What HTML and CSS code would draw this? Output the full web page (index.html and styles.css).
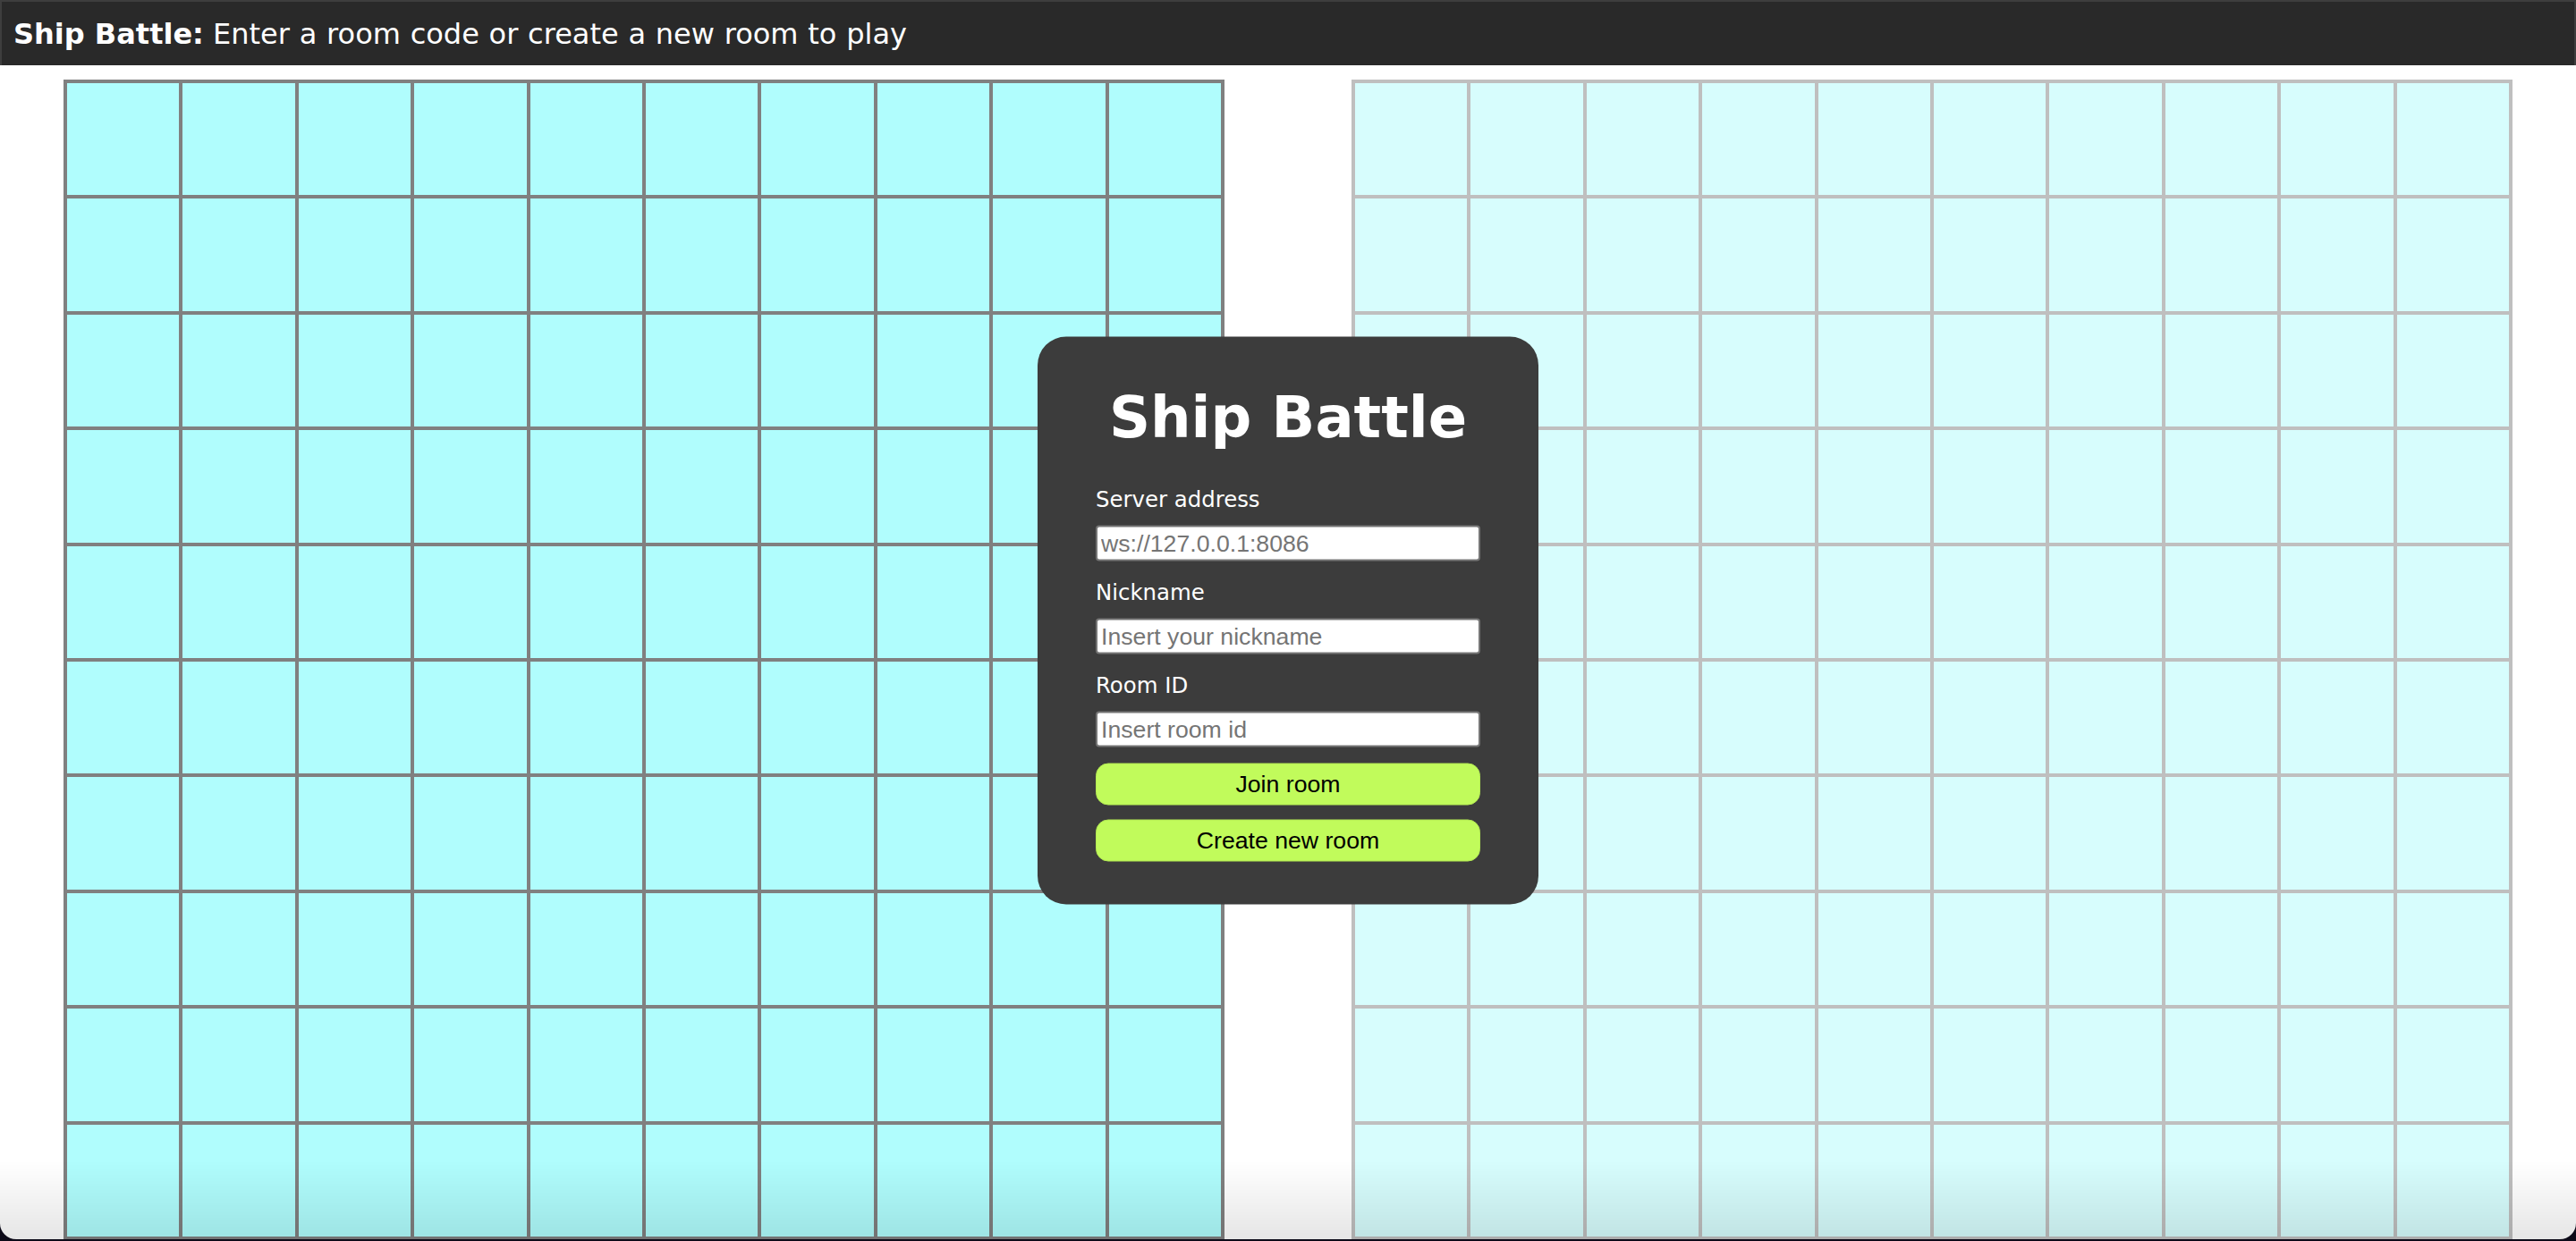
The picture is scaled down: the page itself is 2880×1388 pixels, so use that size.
FILE: index.html
```html
<!DOCTYPE html>
<html lang="en">
<head>
<meta charset="utf-8">
<title>Ship Battle</title>
<link rel="stylesheet" href="styles.css">
</head>
<body>
<header class="topbar"><b>Ship Battle:</b> <span class="topbar-msg">Enter a room code or create a new room to play</span></header>
<main class="boards">
  <div class="board">
    <div class="cell"></div><div class="cell"></div><div class="cell"></div><div class="cell"></div><div class="cell"></div><div class="cell"></div><div class="cell"></div><div class="cell"></div><div class="cell"></div><div class="cell"></div>
    <div class="cell"></div><div class="cell"></div><div class="cell"></div><div class="cell"></div><div class="cell"></div><div class="cell"></div><div class="cell"></div><div class="cell"></div><div class="cell"></div><div class="cell"></div>
    <div class="cell"></div><div class="cell"></div><div class="cell"></div><div class="cell"></div><div class="cell"></div><div class="cell"></div><div class="cell"></div><div class="cell"></div><div class="cell"></div><div class="cell"></div>
    <div class="cell"></div><div class="cell"></div><div class="cell"></div><div class="cell"></div><div class="cell"></div><div class="cell"></div><div class="cell"></div><div class="cell"></div><div class="cell"></div><div class="cell"></div>
    <div class="cell"></div><div class="cell"></div><div class="cell"></div><div class="cell"></div><div class="cell"></div><div class="cell"></div><div class="cell"></div><div class="cell"></div><div class="cell"></div><div class="cell"></div>
    <div class="cell"></div><div class="cell"></div><div class="cell"></div><div class="cell"></div><div class="cell"></div><div class="cell"></div><div class="cell"></div><div class="cell"></div><div class="cell"></div><div class="cell"></div>
    <div class="cell"></div><div class="cell"></div><div class="cell"></div><div class="cell"></div><div class="cell"></div><div class="cell"></div><div class="cell"></div><div class="cell"></div><div class="cell"></div><div class="cell"></div>
    <div class="cell"></div><div class="cell"></div><div class="cell"></div><div class="cell"></div><div class="cell"></div><div class="cell"></div><div class="cell"></div><div class="cell"></div><div class="cell"></div><div class="cell"></div>
    <div class="cell"></div><div class="cell"></div><div class="cell"></div><div class="cell"></div><div class="cell"></div><div class="cell"></div><div class="cell"></div><div class="cell"></div><div class="cell"></div><div class="cell"></div>
    <div class="cell"></div><div class="cell"></div><div class="cell"></div><div class="cell"></div><div class="cell"></div><div class="cell"></div><div class="cell"></div><div class="cell"></div><div class="cell"></div><div class="cell"></div>
  </div>
  <div class="board board-enemy">
    <div class="cell"></div><div class="cell"></div><div class="cell"></div><div class="cell"></div><div class="cell"></div><div class="cell"></div><div class="cell"></div><div class="cell"></div><div class="cell"></div><div class="cell"></div>
    <div class="cell"></div><div class="cell"></div><div class="cell"></div><div class="cell"></div><div class="cell"></div><div class="cell"></div><div class="cell"></div><div class="cell"></div><div class="cell"></div><div class="cell"></div>
    <div class="cell"></div><div class="cell"></div><div class="cell"></div><div class="cell"></div><div class="cell"></div><div class="cell"></div><div class="cell"></div><div class="cell"></div><div class="cell"></div><div class="cell"></div>
    <div class="cell"></div><div class="cell"></div><div class="cell"></div><div class="cell"></div><div class="cell"></div><div class="cell"></div><div class="cell"></div><div class="cell"></div><div class="cell"></div><div class="cell"></div>
    <div class="cell"></div><div class="cell"></div><div class="cell"></div><div class="cell"></div><div class="cell"></div><div class="cell"></div><div class="cell"></div><div class="cell"></div><div class="cell"></div><div class="cell"></div>
    <div class="cell"></div><div class="cell"></div><div class="cell"></div><div class="cell"></div><div class="cell"></div><div class="cell"></div><div class="cell"></div><div class="cell"></div><div class="cell"></div><div class="cell"></div>
    <div class="cell"></div><div class="cell"></div><div class="cell"></div><div class="cell"></div><div class="cell"></div><div class="cell"></div><div class="cell"></div><div class="cell"></div><div class="cell"></div><div class="cell"></div>
    <div class="cell"></div><div class="cell"></div><div class="cell"></div><div class="cell"></div><div class="cell"></div><div class="cell"></div><div class="cell"></div><div class="cell"></div><div class="cell"></div><div class="cell"></div>
    <div class="cell"></div><div class="cell"></div><div class="cell"></div><div class="cell"></div><div class="cell"></div><div class="cell"></div><div class="cell"></div><div class="cell"></div><div class="cell"></div><div class="cell"></div>
    <div class="cell"></div><div class="cell"></div><div class="cell"></div><div class="cell"></div><div class="cell"></div><div class="cell"></div><div class="cell"></div><div class="cell"></div><div class="cell"></div><div class="cell"></div>
  </div>
</main>
<div class="dialog">
  <h1 class="dialog-title">Ship Battle</h1>
  <form class="dialog-form">
    <label class="field-label" for="server">Server address</label>
    <input class="field-input" id="server" type="text" placeholder="ws://127.0.0.1:8086">
    <label class="field-label" for="nick">Nickname</label>
    <input class="field-input" id="nick" type="text" placeholder="Insert your nickname">
    <label class="field-label" for="room">Room ID</label>
    <input class="field-input" id="room" type="text" placeholder="Insert room id">
    <button class="action first" type="button">Join room</button>
    <button class="action" type="button">Create new room</button>
  </form>
</div>
<div class="window-shade"></div>
<div class="window-frame"></div>
</body>
</html>
```
FILE: styles.css
```css
html, body {
  margin: 0;
  padding: 0;
  overflow: hidden;
  background: #ffffff;
}

body {
  font-family: "DejaVu Sans", Verdana, sans-serif;
  height: 1388px;
}

.topbar {
  box-sizing: border-box;
  height: 73px;
  background: #292929;
  color: #ffffff;
  font-size: 32px;
  line-height: 69px;
  padding: 2px 0 0 13px;
  border-top: 2px solid #3e3e3e;
  border-left: 2px solid #3e3e3e;
  border-right: 2px solid #3e3e3e;
  white-space: nowrap;
}

.topbar-msg {
  word-spacing: 0.6px;
}

.boards {
  display: flex;
  justify-content: space-around;
  margin-top: 16px;
}

.board {
  box-sizing: border-box;
  width: 1298px;
  display: grid;
  grid-template-columns: repeat(10, 1fr);
  border: 2px solid #808080;
  flex: none;
}

.cell {
  box-sizing: border-box;
  aspect-ratio: 1 / 1;
  background: #b0fdfd;
  border: 2px solid #808080;
}

.board-enemy {
  opacity: 0.5;
}

.dialog {
  position: fixed;
  left: 50%;
  top: 50%;
  transform: translate(-50%, -50%);
  box-sizing: border-box;
  width: 560px;
  padding: 52px 65px 48px;
  background: #3c3c3c;
  border-radius: 32px;
  color: #ffffff;
}

.dialog-title {
  margin: 0 0 41px;
  font-size: 64px;
  line-height: 76px;
  font-weight: bold;
  text-align: center;
  white-space: nowrap;
}

.dialog-form {
  display: flex;
  flex-direction: column;
  margin: 0;
}

.field-label {
  display: block;
  font-size: 24.4px;
  line-height: 26px;
  margin-bottom: 16px;
  white-space: nowrap;
}

.field-input {
  box-sizing: border-box;
  width: 100%;
  height: 40px;
  margin: 0 0 22px;
  padding: 0 4px;
  border: 2px solid #767676;
  border-radius: 4px;
  background: #ffffff;
  font-family: "Liberation Sans", Arial, sans-serif;
  font-size: 26.67px;
  color: #000000;
}

.field-input::placeholder {
  color: #757575;
}

.action {
  box-sizing: border-box;
  width: 100%;
  height: 47px;
  margin: 0 0 16px;
  padding: 0;
  border: 1px solid #b3ea52;
  border-radius: 14px;
  background: #c1fb5b;
  color: #000000;
  font-family: "Liberation Sans", Arial, sans-serif;
  font-size: 26.67px;
}

.action.first {
  margin-top: -4px;
}

.action:last-child {
  margin-bottom: 0;
}

.window-shade {
  position: fixed;
  left: 0;
  right: 0;
  bottom: 0;
  height: 90px;
  background: linear-gradient(to bottom, rgba(0, 0, 0, 0), rgba(0, 0, 0, 0.1));
  pointer-events: none;
}

.window-frame {
  position: fixed;
  left: 0;
  top: 0;
  right: 0;
  bottom: 2px;
  border-radius: 0 0 18px 18px;
  box-shadow: 0 0 0 40px #0c0a18;
  pointer-events: none;
}
```
